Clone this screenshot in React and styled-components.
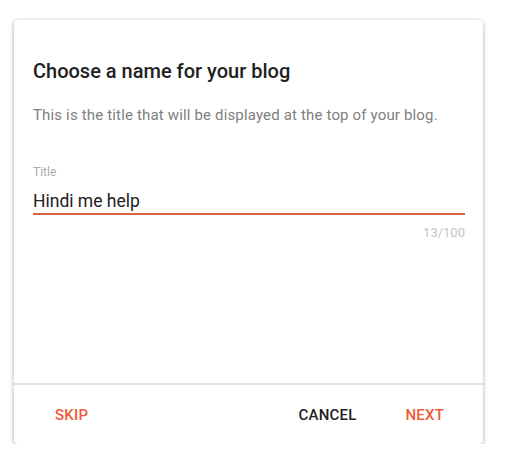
import React from "react";
import styled, { createGlobalStyle } from "styled-components";

const GlobalStyle = createGlobalStyle`
  body {
    margin: 0;
    background: #ffffff;
    font-family: Roboto, "Liberation Sans", Arial, sans-serif;
  }
`;

export default function App() {
  const title = "Hindi me help";
  return (
    <>
      <GlobalStyle />
      <Card>
        <Body>
          <Heading>Choose a name for your blog</Heading>
          <Description>
            This is the title that will be displayed at the top of your blog.
          </Description>
          <Label>Title</Label>
          <Input value={title} readOnly />
          <Counter>{title.length}/100</Counter>
        </Body>
        <Footer>
          <Button $accent>Skip</Button>
          <Spacer />
          <Button>Cancel</Button>
          <Button $accent>Next</Button>
        </Footer>
      </Card>
    </>
  );
}

const Card = styled.div`
  display: flex;
  flex-direction: column;
  margin: 20px 0 0 14px;
  width: 469px;
  height: 424px;
  box-sizing: border-box;
  background: #fff;
  border-radius: 4px;
  box-shadow: 0 1px 4px rgba(0, 0, 0, 0.25), 0 2px 6px rgba(0, 0, 0, 0.1);
`;

const Body = styled.div`
  flex: 1;
  display: flex;
  flex-direction: column;
  padding: 38px 18px 0 19px;
`;

const Heading = styled.h2`
  margin: 0;
  font-size: 20px;
  line-height: 26px;
  font-weight: 500;
  color: #212121;
`;

const Description = styled.p`
  margin: 21px 0 0;
  font-size: 15px;
  line-height: 20px;
  letter-spacing: 0.16px;
  color: #808080;
`;

const Label = styled.label`
  margin-top: 39px;
  font-size: 12px;
  line-height: 16px;
  color: #aaaaaa;
`;

const Input = styled.input`
  margin-top: 9px;
  padding: 0;
  height: 24px;
  font-family: inherit;
  font-size: 17.5px;
  line-height: 24px;
  color: #212121;
  border: none;
  border-bottom: 2px solid #d5643f;
  outline: none;
  background: transparent;
`;

const Counter = styled.div`
  margin-top: 10px;
  align-self: flex-end;
  font-size: 13px;
  line-height: 16px;
  color: #c4c4c4;
`;

const Footer = styled.div`
  display: flex;
  align-items: center;
  height: 59px;
  padding: 0 23px 0 25px;
  border-top: 2px solid #e0e0e0;
`;

const Spacer = styled.div`
  flex: 1;
`;

const Button = styled.button`
  padding: 0 16px;
  height: 36px;
  border: none;
  background: transparent;
  font-family: inherit;
  font-size: 15px;
  font-weight: 500;
  text-transform: uppercase;
  letter-spacing: 0.2px;
  color: ${(p) => (p.$accent ? "#f2583a" : "#212121")};
  cursor: pointer;
  & + & {
    margin-left: 17px;
  }
`;
